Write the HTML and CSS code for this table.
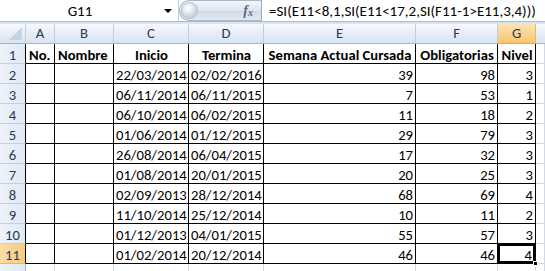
FILE: index.html
```html
<!DOCTYPE html>
<html>
<head>
<meta charset="utf-8">
<link rel="stylesheet" href="styles.css">
</head>
<body>
<div class="app">
  <div class="fbar">
    <div class="namebox">
      <span class="nb-text">G11</span>
      <span class="nb-arrow"></span>
    </div>
    <div class="fxbtn">
      <span class="knob"></span>
      <span class="fx">f<sub>x</sub></span>
    </div>
    <div class="formula">=SI(E11&lt;8,1,SI(E11&lt;17,2,SI(F11-1&gt;E11,3,4)))</div>
  </div>
  <div class="strip"></div>
  <div class="sheet">
    <div class="hd corner"><span class="tri"></span></div>
    <div class="hd">A</div>
    <div class="hd">B</div>
    <div class="hd">C</div>
    <div class="hd">D</div>
    <div class="hd">E</div>
    <div class="hd">F</div>
    <div class="hd sel">G</div>
    <div class="hd last"></div>

    <div class="rh dk">1</div>
    <div class="c b h">No.</div>
    <div class="c b h">Nombre</div>
    <div class="c b h ctr">Inicio</div>
    <div class="c b h ctr">Termina</div>
    <div class="c b h ctr">Semana Actual Cursada</div>
    <div class="c b h ctr">Obligatorias</div>
    <div class="c b h ctr">Nivel</div>
    <div class="c g"></div>

    <div class="rh dk">2</div>
    <div class="c b"></div><div class="c b"></div>
    <div class="c b r">22/03/2014</div><div class="c b r">02/02/2016</div>
    <div class="c b r">39</div><div class="c b r">98</div><div class="c b r">3</div>
    <div class="c g"></div>

    <div class="rh dk">3</div>
    <div class="c b"></div><div class="c b"></div>
    <div class="c b r">06/11/2014</div><div class="c b r">06/11/2015</div>
    <div class="c b r">7</div><div class="c b r">53</div><div class="c b r">1</div>
    <div class="c g"></div>

    <div class="rh dk">4</div>
    <div class="c b"></div><div class="c b"></div>
    <div class="c b r">06/10/2014</div><div class="c b r">06/02/2015</div>
    <div class="c b r">11</div><div class="c b r">18</div><div class="c b r">2</div>
    <div class="c g"></div>

    <div class="rh dk">5</div>
    <div class="c b"></div><div class="c b"></div>
    <div class="c b r">01/06/2014</div><div class="c b r">01/12/2015</div>
    <div class="c b r">29</div><div class="c b r">79</div><div class="c b r">3</div>
    <div class="c g"></div>

    <div class="rh dk">6</div>
    <div class="c b"></div><div class="c b"></div>
    <div class="c b r">26/08/2014</div><div class="c b r">06/04/2015</div>
    <div class="c b r">17</div><div class="c b r">32</div><div class="c b r">3</div>
    <div class="c g"></div>

    <div class="rh dk">7</div>
    <div class="c b"></div><div class="c b"></div>
    <div class="c b r">01/08/2014</div><div class="c b r">20/01/2015</div>
    <div class="c b r">20</div><div class="c b r">25</div><div class="c b r">3</div>
    <div class="c g"></div>

    <div class="rh dk">8</div>
    <div class="c b"></div><div class="c b"></div>
    <div class="c b r">02/09/2013</div><div class="c b r">28/12/2014</div>
    <div class="c b r">68</div><div class="c b r">69</div><div class="c b r">4</div>
    <div class="c g"></div>

    <div class="rh dk">9</div>
    <div class="c b"></div><div class="c b"></div>
    <div class="c b r">11/10/2014</div><div class="c b r">25/12/2014</div>
    <div class="c b r">10</div><div class="c b r">11</div><div class="c b r">2</div>
    <div class="c g"></div>

    <div class="rh dk">10</div>
    <div class="c b"></div><div class="c b"></div>
    <div class="c b r">01/12/2013</div><div class="c b r">04/01/2015</div>
    <div class="c b r">55</div><div class="c b r">57</div><div class="c b r">3</div>
    <div class="c g"></div>

    <div class="rh sel dk">11</div>
    <div class="c b"></div><div class="c b"></div>
    <div class="c b r">01/02/2014</div><div class="c b r">20/12/2014</div>
    <div class="c b r">46</div><div class="c b r">46</div>
    <div class="c b r active">4<span class="handle"></span></div>
    <div class="c g"></div>

    <div class="rh"></div>
    <div class="c g"></div><div class="c g"></div><div class="c g"></div><div class="c g"></div>
    <div class="c g"></div><div class="c g"></div><div class="c g"></div><div class="c g"></div>
  </div>
</div>
</body>
</html>
```
FILE: styles.css
```css
* { box-sizing: border-box; }
html, body { margin: 0; padding: 0; background: #ffffff; }
body {
  font-family: Carlito, Lato, "Liberation Sans", sans-serif;
  font-size: 14.67px;
  color: #000;
  overflow: hidden;
  width: 545px;
  height: 271px;
}
.app { width: 545px; height: 271px; overflow: hidden; }

.fbar {
  display: flex;
  height: 22px;
  background: #fff;
  border-bottom: 1px solid #a9bbd3;
}
.namebox {
  width: 179px;
  display: flex;
  align-items: center;
  border-right: 1px solid #c3d0e2;
}
.nb-text {
  flex: 1;
  text-align: center;
  font-size: 15px;
  padding-right: 4px;
  padding-top: 1px;
}
.nb-arrow {
  width: 0; height: 0;
  border-left: 4px solid transparent;
  border-right: 4px solid transparent;
  border-top: 4px solid #000;
  margin-right: 6px;
}
.fxbtn {
  width: 83px;
  height: 21px;
  border-radius: 10px 0 0 10px;
  border: 1px solid #a6b6cb;
  border-right: 1px solid #9aabc2;
  background: linear-gradient(#f4f7fb, #dde5ef 50%, #cfd9e6 51%, #e4eaf2);
  display: flex;
  align-items: center;
  justify-content: space-between;
  padding: 0 8px 0 1px;
}
.knob {
  width: 17px; height: 17px;
  border-radius: 50%;
  background: radial-gradient(circle at 40% 35%, #ffffff 0%, #e6ebf1 35%, #aeb8c5 100%);
  border: 1px solid #b4c0cf;
}
.fx {
  font-family: "Liberation Serif", serif;
  font-style: italic;
  font-weight: bold;
  font-size: 14px;
  color: #5d6b7e;
  line-height: 1;
}
.fx sub { font-size: 10px; vertical-align: -1px; }
.formula {
  flex: 1;
  min-width: 0;
  padding-left: 7px;
  padding-top: 1px;
  font-size: 15px;
  display: flex;
  align-items: center;
  white-space: nowrap;
  overflow: hidden;
}

.strip { height: 2px; background: #dbe5f1; }

.sheet {
  display: grid;
  grid-template-columns: 26px 29px 59px 75px 75px 152px 82px 38px 9px;
  grid-template-rows: 20px repeat(11, 20px) 20px;
}

.hd {
  background: linear-gradient(#f6f9fc, #e4ebf5 60%, #dae3ef);
  border-right: 1px solid #c0cfe2;
  border-bottom: 1px solid #9eb6ce;
  color: #2b3a4f;
  text-align: center;
  line-height: 19px;
  font-size: 14.67px;
}
.hd.sel {
  background: linear-gradient(#fbe3b4, #f9d28e 60%, #f6c46e);
  border-right-color: #f2b55e;
  border-bottom-color: #f2a23f;
}
.hd.last { border-right: none; }
.corner { position: relative; }
.tri {
  position: absolute;
  right: 3px; bottom: 3px;
  width: 0; height: 0;
  border-left: 13px solid transparent;
  border-bottom: 13px solid #c6d3e3;
}

.rh {
  background: linear-gradient(90deg, #edf2f9, #e1e9f4);
  border-right: 1px solid #9eb6ce;
  border-bottom: 1px solid #c0cfe2;
  color: #2b3a4f;
  text-align: center;
  line-height: 20px;
  padding-top: 1px;
}
.rh.dk { border-right-color: #000; }
.rh.sel {
  background: linear-gradient(90deg, #fbdca6, #f8cb82);
  border-bottom-color: #f2b55e;
}

.c {
  line-height: 20px;
  padding: 1px 2px 0 2px;
  white-space: nowrap;
  overflow: hidden;
}
.c.b {
  border-right: 1px solid #000;
  border-bottom: 1px solid #000;
}
.c.g {
  border-right: 1px solid #d0d7e5;
  border-bottom: 1px solid #d0d7e5;
}
.c.h { font-weight: bold; padding-left: 3px; }
.c.ctr { text-align: center; }
.c.r { text-align: right; }

.active {
  position: relative;
  overflow: visible;
  box-shadow: inset 0 0 0 2px #000;
  padding-right: 3px;
}
.handle {
  position: absolute;
  right: -3px; bottom: -3px;
  width: 5px; height: 5px;
  background: #000;
  border: 1px solid #fff;
}
```
